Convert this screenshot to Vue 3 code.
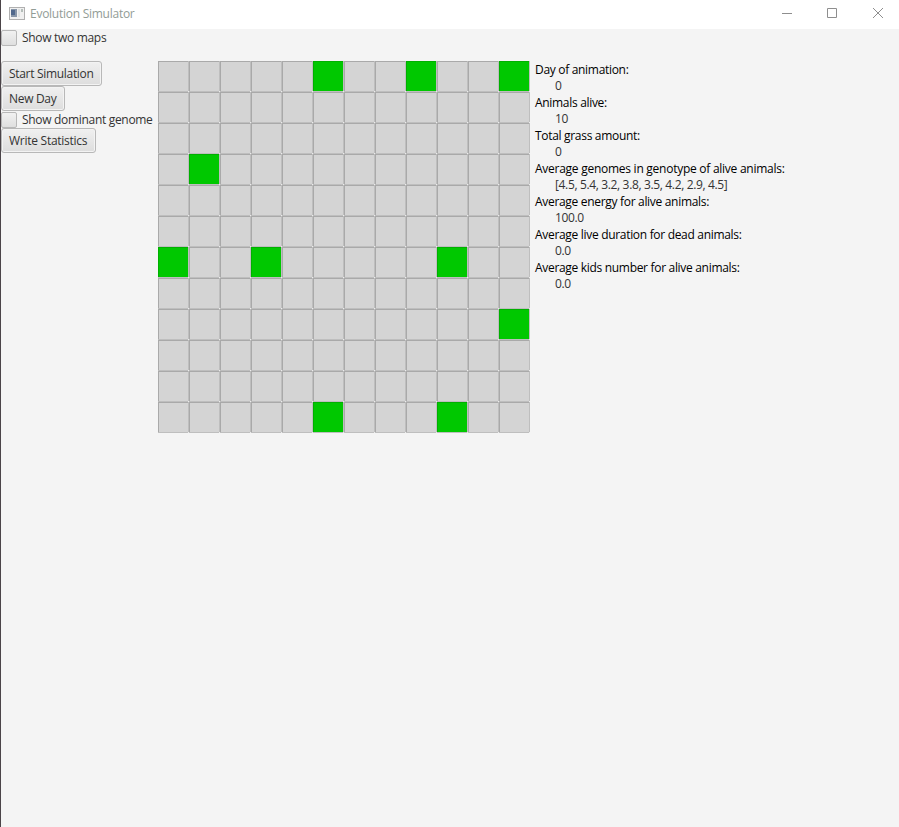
<script setup>
const size = 12
const grass = new Set(['0-5', '0-8', '0-11', '3-1', '6-0', '6-3', '6-9', '8-11', '11-5', '11-9'])
const cells = Array.from({ length: size * size }, (_, i) => ({
  id: i,
  grass: grass.has(`${Math.floor(i / size)}-${i % size}`),
}))
const stats = [
  ['Day of animation:', '0'],
  ['Animals alive:', '10'],
  ['Total grass amount:', '0'],
  ['Average genomes in genotype of alive animals:', '[4.5, 5.4, 3.2, 3.8, 3.5, 4.2, 2.9, 4.5]'],
  ['Average energy for alive animals:', '100.0'],
  ['Average live duration for dead animals:', '0.0'],
  ['Average kids number for alive animals:', '0.0'],
]
</script>

<template>
  <div class="window">
    <header class="titlebar">
      <svg class="app-icon" width="16" height="13" viewBox="0 0 16 13" shape-rendering="crispEdges">
        <rect x="0.5" y="0.5" width="15" height="12" fill="#f0f0f0" stroke="#b0b0b0" />
        <rect x="2" y="2" width="6" height="8" fill="#8795a8" />
        <rect x="2" y="3" width="4" height="5" fill="#50688c" />
        <rect x="9" y="2" width="2" height="8" fill="#dde0e1" />
        <rect x="12" y="2" width="2" height="3" fill="#b4bdb9" />
      </svg>
      <span class="title">Evolution Simulator</span>
      <svg class="controls" width="139" height="28" viewBox="0 0 139 28" fill="none" stroke="#8e8e8e">
        <path d="M22 13.5h10" />
        <path d="M67.5 8.5h9v9h-9z" />
        <path d="M113 8l10 10M123 8l-10 10" />
      </svg>
    </header>
    <label class="check maps"><i class="box"></i><span>Show two maps</span></label>
    <main class="content">
      <div class="side">
        <button class="start">Start Simulation</button>
        <button class="day">New Day</button>
        <label class="check"><i class="box"></i><span>Show dominant genome</span></label>
        <button class="write">Write Statistics</button>
      </div>
      <div class="map">
        <div v-for="c in cells" :key="c.id" class="cell" :class="{ grass: c.grass }"></div>
      </div>
      <dl class="stats">
        <template v-for="[name, value] in stats" :key="name">
          <dt :class="{ long: name.length > 40 }">{{ name }}</dt>
          <dd>{{ value }}</dd>
        </template>
      </dl>
    </main>
  </div>
</template>

<style>
body { margin: 0; }
</style>

<style scoped>
.window {
  box-sizing: border-box;
  width: 899px;
  height: 827px;
  border-left: 1px solid #4b4448;
  background: #f4f4f4;
  overflow: hidden;
  font: 12px/16px "Open Sans", "Noto Sans", sans-serif;
  letter-spacing: -0.31px;
  color: #333;
  white-space: nowrap;
}
.titlebar {
  display: flex;
  align-items: center;
  height: 29px;
  background: #fff;
  color: #929c96;
}
.app-icon { margin: 0 5px 2px 8px; }
.title {
  margin-bottom: 1px;
  letter-spacing: -0.26px;
}
.controls { margin: 0 0 1px auto; }
.check {
  box-sizing: border-box;
  display: flex;
  align-items: flex-start;
  gap: 5px;
  height: 17px;
  padding-top: 1px;
}
.box {
  box-sizing: border-box;
  width: 16px;
  height: 16px;
  border: 1px solid #b8b8b8;
  border-radius: 2px;
  background: linear-gradient(#f1f1f1, #dfdfdf);
}
.content {
  display: flex;
  align-items: flex-start;
  margin-top: 15px;
}
.side {
  display: flex;
  flex-direction: column;
  align-items: flex-start;
  width: 157px;
}
button {
  box-sizing: border-box;
  height: 25px;
  padding: 1px 0 0 7px;
  border: 1px solid #b8b8b8;
  border-radius: 3px;
  background: linear-gradient(#f0f0f0, #dddddd);
  box-shadow: inset 0 0 0 1px #f3f3f3;
  font: inherit;
  letter-spacing: inherit;
  color: inherit;
  text-align: left;
}
.start { width: 101px; }
.day { width: 64px; }
.write {
  width: 95px;
  letter-spacing: -0.26px;
}
.map {
  display: grid;
  grid-template-columns: repeat(12, 31px);
  grid-auto-rows: 31px;
}
.cell {
  background:
    linear-gradient(#ececec, #ececec) right bottom / 1px 1px no-repeat,
    linear-gradient(#a9a9a9, #a9a9a9) left top / 30px 1px no-repeat,
    linear-gradient(#a9a9a9, #a9a9a9) left top / 1px 30px no-repeat,
    linear-gradient(#bebebe, #bebebe) right top / 1px 30px no-repeat,
    linear-gradient(#bebebe, #bebebe) left bottom / 30px 1px no-repeat,
    #d4d4d4;
}
.cell.grass {
  background:
    linear-gradient(#ececec, #ececec) right bottom / 1px 1px no-repeat,
    linear-gradient(#00b000, #00b000) left top / 30px 1px no-repeat,
    linear-gradient(#00b000, #00b000) left top / 1px 30px no-repeat,
    linear-gradient(#bebebe, #bebebe) right top / 1px 30px no-repeat,
    linear-gradient(#bebebe, #bebebe) left bottom / 30px 1px no-repeat,
    #00c800;
}
.stats { margin: 1px 0 0 5px; }
dt {
  height: 16px;
  color: #000;
}
dt.long { letter-spacing: -0.26px; }
dd {
  height: 17px;
  margin: 0 0 0 20px;
  letter-spacing: -0.35px;
}
</style>
